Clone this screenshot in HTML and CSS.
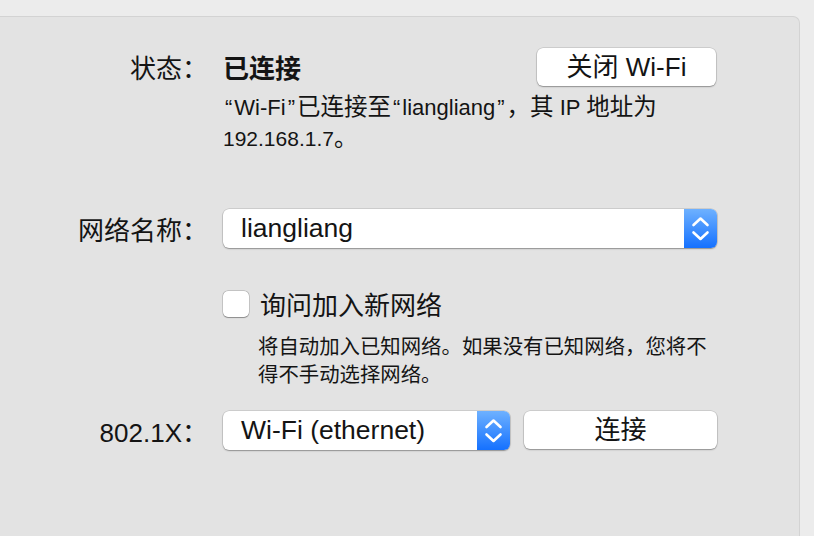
FILE: index.html
```html
<!DOCTYPE html>
<html lang="zh-CN">
<head>
<meta charset="utf-8">
<title>Wi-Fi</title>
<link rel="stylesheet" href="styles.css">
</head>
<body>
<div class="panel">
  <div class="row status-row">
    <div class="label">状态：</div>
    <div class="status-value">已连接</div>
    <button class="btn btn-wifi">关闭 Wi-Fi</button>
  </div>
  <div class="desc desc-status"><span class="lat"><span class="q">“</span>Wi-Fi<span class="q">”</span></span>已连接至<span class="lat"><span class="q">“</span>liangliang<span class="q">”</span></span>，其<span class="lat"> IP </span>地址为<br><span class="num">192.168.1.7</span>。</div>

  <div class="row network-row">
    <div class="label">网络名称：</div>
    <div class="popup popup-wide">
      <span class="popup-text">liangliang</span>
      <span class="stepper">
        <svg width="33" height="39" viewBox="0 0 33 39"><path d="M9.5 16 L16.5 9.5 L23.5 16 M9.5 23.5 L16.5 30 L23.5 23.5" fill="none" stroke="#fff" stroke-width="2.6" stroke-linecap="round" stroke-linejoin="round"/></svg>
      </span>
    </div>
  </div>

  <div class="row check-row">
    <span class="checkbox"></span>
    <span class="check-label">询问加入新网络</span>
  </div>
  <div class="desc desc-check">将自动加入已知网络。如果没有已知网络，您将不<br>得不手动选择网络。</div>

  <div class="row dot1x-row">
    <div class="label">802.1X：</div>
    <div class="popup popup-narrow">
      <span class="popup-text">Wi-Fi (ethernet)</span>
      <span class="stepper">
        <svg width="33" height="39" viewBox="0 0 33 39"><path d="M9.5 16 L16.5 9.5 L23.5 16 M9.5 23.5 L16.5 30 L23.5 23.5" fill="none" stroke="#fff" stroke-width="2.6" stroke-linecap="round" stroke-linejoin="round"/></svg>
      </span>
    </div>
    <button class="btn btn-connect">连接</button>
  </div>
</div>
</body>
</html>
```
FILE: styles.css
```css
html, body {
  margin: 0;
  padding: 0;
}
body {
  background: #ececec;
  width: 814px;
  height: 536px;
  overflow: hidden;
  font-family: "Liberation Sans", "Noto Sans CJK SC", sans-serif;
  color: #141414;
}
.panel {
  margin-top: 16px;
  margin-left: -10px;
  width: 810px;
  height: 540px;
  background: #e3e3e3;
  border-top: 1px solid #d3d3d3;
  border-right: 1px solid #d3d3d3;
  border-top-right-radius: 7px;
  box-sizing: border-box;
  padding-left: 10px;
}
.row {
  display: flex;
  align-items: center;
  font-size: 26px;
}
.label {
  width: 208px;
  flex: none;
  text-align: right;
  font-size: 26px;
}
.status-row {
  margin-top: 30px;
  height: 39px;
}
.status-value {
  margin-left: 15px;
  font-weight: bold;
  font-size: 26px;
  width: 314px;
}
.btn {
  font-family: inherit;
  font-size: 26px;
  color: #141414;
  background: #fff;
  border: none;
  border-radius: 6px;
  box-shadow: 0 0 0 0.5px rgba(0,0,0,0.18), 0 1px 1.5px rgba(0,0,0,0.3);
  padding: 0;
  height: 38px;
  line-height: 38px;
}
.btn-wifi {
  width: 179px;
}
.desc-status {
  margin-left: 223px;
  margin-top: 6px;
  font-size: 23.5px;
  line-height: 30px;
  height: 60px;
}
.lat {
  font-size: 22px;
}
.q {
  padding: 0 2px;
}
.num {
  font-size: 21px;
}
.network-row {
  margin-top: 56px;
  height: 40px;
}
.popup {
  margin-left: 15px;
  height: 39px;
  display: flex;
  align-items: center;
  background: #fff;
  border-radius: 6px;
  box-shadow: 0 0 0 0.5px rgba(0,0,0,0.18), 0 1px 1.5px rgba(0,0,0,0.3);
  box-sizing: border-box;
}
.popup-wide {
  width: 494px;
}
.popup-narrow {
  width: 287px;
}
.popup-text {
  flex: 1;
  padding-left: 18px;
  font-size: 26.5px;
}
.stepper {
  width: 33px;
  height: 39px;
  flex: none;
  border-radius: 0 6px 6px 0;
  background: linear-gradient(#6eb1ff, #1571ff);
  display: flex;
}
.stepper svg {
  display: block;
}
.check-row {
  margin-top: 42px;
  padding-left: 223px;
  height: 27px;
}
.checkbox {
  width: 26px;
  height: 26px;
  box-sizing: border-box;
  background: #fff;
  border-radius: 5px;
  box-shadow: 0 0 0 0.5px rgba(0,0,0,0.22), 0 0.5px 1px rgba(0,0,0,0.3);
}
.check-label {
  margin-left: 11px;
  font-size: 26px;
}
.desc-check {
  margin-left: 258px;
  margin-top: 16px;
  font-size: 20.4px;
  line-height: 28px;
  height: 56px;
}
.dot1x-row {
  margin-top: 21px;
  height: 40px;
}
.btn-connect {
  margin-left: 14px;
  width: 193px;
}
```
